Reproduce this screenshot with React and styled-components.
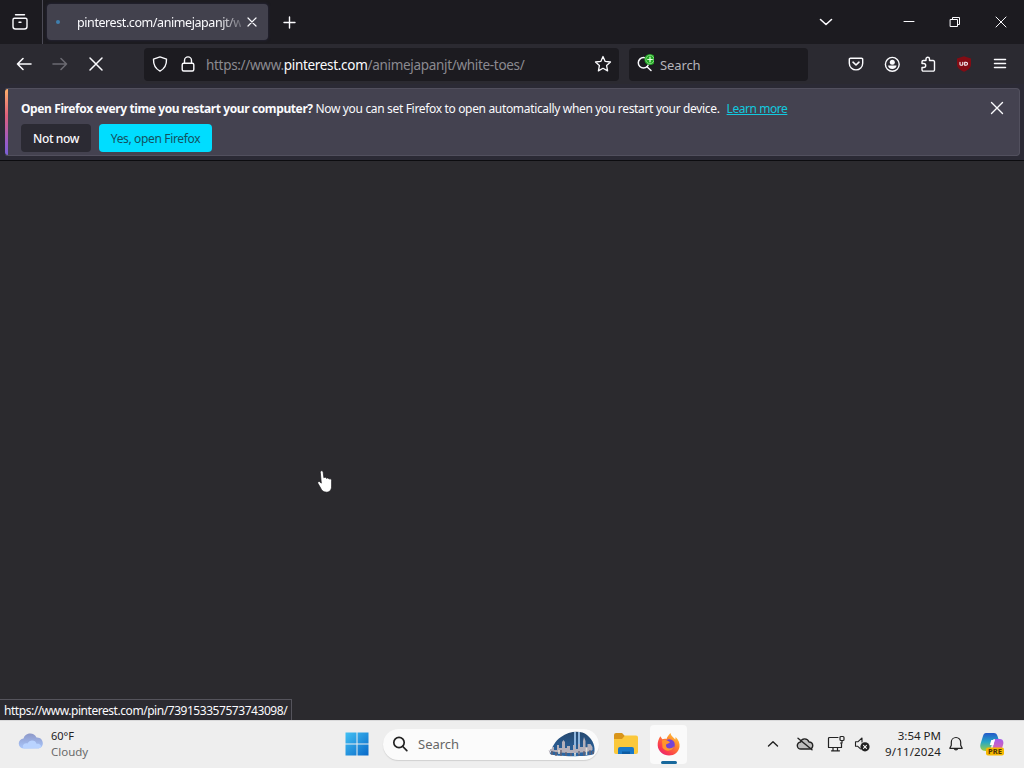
import React from "react";
import styled, { createGlobalStyle } from "styled-components";

const GlobalStyle = createGlobalStyle`
  * {
    box-sizing: border-box;
  }

  body {
    margin: 0;
    overflow: hidden;
    font-family: "Noto Sans", "Open Sans", sans-serif;
  }
`;

const Desktop = styled.div`
  position: relative;
  display: flex;
  flex-direction: column;
  width: 1024px;
  height: 768px;
  background: #2b2a2e;
`;

const Text = styled.span`
  white-space: pre;
  font-size: ${props => props.$size || 12}px;
  font-weight: ${props => props.$weight || 400};
  letter-spacing: ${props => props.$spacing || 0}px;
  color: ${props => props.$color || "#fbfbfe"};
`;

const TabStrip = styled.div`
  display: flex;
  align-items: center;
  height: 44px;
  background: #1c1b20;
`;

const Cell = styled.div`
  display: flex;
  flex: none;
  align-items: center;
  justify-content: center;
  width: ${props => props.$width || 36}px;
  height: 100%;
`;

const FirefoxView = styled(Cell)`
  width: 43px;
  padding-right: 3px;
  border-right: 1px solid #4b4a55;
`;

const Tab = styled.div`
  display: flex;
  align-items: center;
  width: 221px;
  height: 36px;
  margin-left: 4px;
  border-radius: 4px;
  background: #42414d;
  box-shadow: 0 0 3px #2a2940;
`;

const Loader = styled.div`
  width: 4px;
  height: 4px;
  margin: 0 17px 0 9px;
  border-radius: 50%;
  background: #3f7fae;
`;

const TabTitle = styled.div`
  width: 164px;
  overflow: hidden;
  line-height: 20px;
  white-space: nowrap;
  mask-image: linear-gradient(to right, #000 142px, transparent 170px);
`;

const Spacer = styled.div`
  flex: 1;
`;

const Toolbar = styled.div`
  display: flex;
  align-items: center;
  height: 40px;
  padding: 0 6px;
  background: #2b2a31;
`;

const Field = styled.div`
  display: flex;
  align-items: center;
  width: ${props => props.$width}px;
  height: 33px;
  margin-left: ${props => props.$gap}px;
  border-radius: 4px;
  background: #1c1b20;
`;

const UrlText = styled.div`
  flex: 1;
  padding: 1px 0 0 6px;
  line-height: 20px;
  white-space: nowrap;
`;

const SearchText = styled.div`
  padding: 1px 0 0 3px;
  line-height: 20px;
`;

const NoticeArea = styled.div`
  height: 77px;
  padding: 4px 4px 0;
  border-bottom: 1px solid #0c0c0f;
  background: #2b2a35;
`;

const Notice = styled.div`
  display: flex;
  height: 68px;
  border: 1px solid #52505e;
  border-left-color: #2b2a35;
  border-radius: 4px;
  overflow: hidden;
  background: #444250;
`;

const NoticeStripe = styled.div`
  width: 3px;
  background: linear-gradient(#ffb06a, #e0607c 40%, #9a5bc8 80%, #7a5fd8);
`;

const NoticeBody = styled.div`
  flex: 1;
  padding: 8px 0 0 13px;
`;

const NoticeMessage = styled.div`
  height: 27px;
  line-height: 20px;
  white-space: nowrap;
`;

const Link = styled(Text)`
  margin-left: 7px;
  color: #12c9df;
  text-decoration: underline;
`;

const NoticeButtons = styled.div`
  display: flex;
  gap: 8px;
`;

const Button = styled.button`
  display: flex;
  align-items: center;
  justify-content: center;
  width: ${props => props.$width}px;
  height: 28px;
  padding: 1px 0 0;
  border: 0;
  border-radius: 4px;
  font-family: inherit;
  background: ${props => (props.$primary ? "#00ddff" : "#2b2a33")};
`;

const NoticeClose = styled.div`
  padding: 12px 15px 0 0;
  line-height: 0;
`;

const Page = styled.div`
  flex: 1;
  display: flex;
  align-items: flex-end;
`;

const StatusPanel = styled.div`
  width: 292px;
  height: 21px;
  padding-left: 4px;
  border: 1px solid #55545c;
  border-width: 1px 1px 0 0;
  line-height: 19px;
  background: #2b2a30;
`;

const Pointer = styled.svg`
  position: absolute;
  left: 315px;
  top: 469px;
`;

const Taskbar = styled.div`
  display: flex;
  align-items: center;
  height: 48px;
  padding-bottom: 1px;
  border-top: 1px solid #d9d9da;
  background: #eeeeee;
`;

const Weather = styled.div`
  display: flex;
  gap: 7px;
  width: 336px;
  padding-left: 18px;
`;

const Lines = styled.div`
  display: flex;
  flex-direction: column;
  align-items: ${props => props.$align || "flex-start"};
  line-height: 16px;
`;

const TaskSearch = styled.div`
  display: flex;
  align-items: center;
  width: 216px;
  height: 31px;
  margin: 0 6px;
  padding: 0 3px 0 9px;
  border-radius: 16px;
  background: #fbfbfb;
  box-shadow: 0 1px 1px #d0d0d0;
`;

const TaskSearchText = styled.div`
  flex: 1;
  padding: 0 0 1px 10px;
  line-height: 20px;
`;

const ActiveApp = styled.div`
  display: flex;
  flex-direction: column;
  align-items: center;
  width: 37px;
  height: 39px;
  padding-top: 7px;
  margin-left: 4px;
  border-radius: 4px;
  background: #fafafa;
`;

const ActiveMark = styled.div`
  width: 16px;
  height: 3px;
  margin-top: 5px;
  border-radius: 2px;
  background: #17689c;
`;

const Clock = styled(Lines)`
  width: 72px;
  padding-right: 4px;
`;

// shared wrapper for the line icons
const Icon = ({ size = 16, color = "#fbfbfe", stroke = 1.4, children }) => (
  <svg
    width={size}
    height={size}
    viewBox={`0 0 ${size} ${size}`}
    fill="none"
    stroke={color}
    strokeWidth={stroke}
    strokeLinecap="round"
    strokeLinejoin="round"
  >
    {children}
  </svg>
);

const TabBar = () => (
  <TabStrip>
    <FirefoxView>
      <Icon size={18} stroke={1.4}>
        <path d="M4.500 1.700h9M3.500 5.200h11A1.500 1.500 0 0 1 16 6.700v6.800a2.500 2.500 0 0 1-2.500 2.500h-9A2.500 2.500 0 0 1 2 13.500V6.700a1.500 1.500 0 0 1 1.500-1.500zM8 9.300h2" />
      </Icon>
    </FirefoxView>
    <Tab>
      <Loader />
      <TabTitle>
        <Text $size={12.5} $spacing={-0.42}>
          pinterest.com/animejapanjt/w
        </Text>
      </TabTitle>
      <Cell $width={22}>
        <Icon size={10} stroke={1.2}>
          <path d="M1 1l8 8M9 1L1 9" />
        </Icon>
      </Cell>
    </Tab>
    <Cell $width={43}>
      <Icon size={13}>
        <path d="M6.500 1v11M1 6.500h11" />
      </Icon>
    </Cell>
    <Spacer />
    <Cell $width={120}>
      <Icon size={14} stroke={1.6}>
        <path d="M1.500 4.500L7 9.500l5.500-5" />
      </Icon>
    </Cell>
    <Cell $width={46}>
      <Icon size={12} stroke={1}>
        <path d="M1 5.500h10" />
      </Icon>
    </Cell>
    <Cell $width={46}>
      <Icon size={12} stroke={1}>
        <path d="M1.500 3.500h7v7h-7zM3.500 3.500v-2h7v7h-2" />
      </Icon>
    </Cell>
    <Cell $width={46}>
      <Icon size={12} stroke={1}>
        <path d="M1 1l10 10M11 1L1 11" />
      </Icon>
    </Cell>
  </TabStrip>
);

const NavBar = () => (
  <Toolbar>
    <Cell>
      <Icon stroke={1.6}>
        <path d="M15 8H1.500M7 2.500L1.500 8 7 13.500" />
      </Icon>
    </Cell>
    <Cell>
      <Icon color="#6b6a71" stroke={1.6}>
        <path d="M1 8h13.500M9 2.500L14.500 8 9 13.500" />
      </Icon>
    </Cell>
    <Cell>
      <Icon stroke={1.5}>
        <path d="M2 2l12 12M14 2L2 14" />
      </Icon>
    </Cell>
    <Field $width={475} $gap={30}>
      <Cell $width={32}>
        <Icon>
          <path d="M8 .9l6.500 2.200c.2 5-1.200 9.200-6.500 12C2.700 12.300 1.300 8.100 1.500 3.100z" />
        </Icon>
      </Cell>
      <Cell $width={24}>
        <Icon>
          <rect x="2.200" y="7.300" width="11.600" height="7.700" rx="1.500" />
          <path d="M4.500 7V4.400a3.500 3.500 0 0 1 7 0V7" />
        </Icon>
      </Cell>
      <UrlText>
        <Text $size={13.5} $spacing={-0.31} $color="#8b8a90">
          https://www.
        </Text>
        <Text $size={13.5} $spacing={-0.31}>
          pinterest.com
        </Text>
        <Text $size={13.5} $spacing={-0.31} $color="#8b8a90">
          /animejapanjt/white-toes/
        </Text>
      </UrlText>
      <Cell $width={32}>
        <Icon size={18} stroke={1.3}>
          <path d="M9 1.500l2.200 4.900 5.300.6-3.900 3.600 1 5.300L9 13.300l-4.600 2.600 1-5.300L1.500 7l5.300-.6z" />
        </Icon>
      </Cell>
    </Field>
    <Field $width={179} $gap={10}>
      <Cell $width={28}>
        <Icon size={22} stroke={1.5}>
          <circle cx="11.500" cy="9.800" r="5.200" />
          <path d="M15 13.800l4 3.700" />
          <circle cx="18" cy="6.500" r="5.600" fill="#22a824" stroke="none" />
          <circle cx="18" cy="6.500" r="4.200" stroke="#b8f0b0" strokeWidth=".6" />
          <path d="M18 4.200v4.600M15.700 6.500h4.600" stroke="#e4ffe0" strokeWidth="1.200" />
        </Icon>
      </Cell>
      <SearchText>
        <Text $size={13} $spacing={-0.1} $color="#b5b4ba">
          Search
        </Text>
      </SearchText>
    </Field>
    <Spacer />
    <Cell>
      <Icon>
        <path d="M2.500 2.200h11a1.200 1.200 0 0 1 1.200 1.200v3.800a6.700 6.700 0 0 1-13.400 0V3.400a1.200 1.200 0 0 1 1.200-1.200z" />
        <path d="M5 6.200l3 2.800 3-2.800" stroke="#fbfbfe" strokeWidth="1.600" />
      </Icon>
    </Cell>
    <Cell>
      <Icon>
        <circle cx="8.300" cy="8.300" r="6.900" />
        <circle cx="8.300" cy="6.200" r="2.500" fill="#fbfbfe" stroke="none" />
        <path
          d="M4.100 9.600h8.400c0 2-1.800 3.500-4.200 3.500s-4.200-1.500-4.200-3.500z"
          fill="#fbfbfe"
          stroke="none"
        />
      </Icon>
    </Cell>
    <Cell>
      <Icon>
        <path d="M2 7.500V5.800A1.300 1.300 0 0 1 3.300 4.500H6V3a1.700 1.700 0 0 1 3.500 0v1.500h3.700a1.300 1.300 0 0 1 1.300 1.300v8a1.300 1.300 0 0 1-1.300 1.300H3.300A1.300 1.300 0 0 1 2 13.800v-2.300h1.700a2 2 0 0 0 0-4z" />
      </Icon>
    </Cell>
    <Cell>
      <Icon>
        <path
          d="M8 .3l7 2.200v6C15 12 11.500 14.500 8 15.800 4.500 14.500 1 12 1 8.500v-6z"
          fill="#830c14"
          stroke="none"
        />
        <path
          d="M4 6.200v2.200c0 1.200 2.800 1.200 2.800 0V6.200M8.700 6.200v3.100h1.200c2.100 0 2.100-3.100 0-3.100z"
          strokeWidth="1.100"
        />
      </Icon>
    </Cell>
    <Cell>
      <Icon stroke={1.5}>
        <path d="M2.500 3.500h11M2.500 7.500h11M2.500 11.500h11" />
      </Icon>
    </Cell>
  </Toolbar>
);

const StartupNotice = () => (
  <NoticeArea>
    <Notice>
      <NoticeStripe />
      <NoticeBody>
        <NoticeMessage>
          <Text $weight={700} $spacing={-0.39}>
            Open Firefox every time you restart your computer?
          </Text>
          <Text $spacing={-0.335}>
            {" "}
            Now you can set Firefox to open automatically when you restart your
            device.
          </Text>
          <Link $spacing={-0.45}>Learn more</Link>
        </NoticeMessage>
        <NoticeButtons>
          <Button $width={70}>
            <Text $weight={500} $spacing={-0.4}>
              Not now
            </Text>
          </Button>
          <Button $width={113} $primary>
            <Text $color="#13515f" $spacing={-0.35}>
              Yes, open Firefox
            </Text>
          </Button>
        </NoticeButtons>
      </NoticeBody>
      <NoticeClose>
        <Icon size={14}>
          <path d="M1.500 1.500l11 11M12.500 1.500l-11 11" />
        </Icon>
      </NoticeClose>
    </Notice>
  </NoticeArea>
);

const CloudIcon = () => (
  <svg width="26" height="26" viewBox="0 0 26 26">
    <defs>
      <linearGradient id="cloud" x2="0" y2="1">
        <stop offset="0" stopColor="#8d98c8" />
        <stop offset="1" stopColor="#a9c6fb" />
      </linearGradient>
    </defs>
    <path
      d="M6 20.500a5 5 0 0 1-.5-10C7 4.500 16 3.500 18.500 9.500c8-.5 8.500 11 1 11z"
      fill="url(#cloud)"
    />
    <path
      d="M6 20.500c-3-2 0-6 3.500-5 2-4.500 8.500-3.500 9 .3 3.500-.8 6 2.500 3.500 4.200z"
      fill="#b9d3ff"
    />
  </svg>
);

const WindowsIcon = () => (
  <svg width="24" height="24" viewBox="0 0 24 24">
    <defs>
      <linearGradient id="win" x2="1" y2="1">
        <stop offset="0" stopColor="#43c1f4" />
        <stop offset="1" stopColor="#0868c8" />
      </linearGradient>
    </defs>
    <path
      d="M.5.500h11v11H.5zM12.500.500h11v11h-11zM.5 12.500h11v11H.5zM12.500 12.500h11v11h-11z"
      fill="url(#win)"
    />
  </svg>
);

// night skyline with two light beams
const SkylineArt = () => (
  <svg width="48" height="28" viewBox="0 0 48 28">
    <defs>
      <linearGradient id="sky" x2="0" y2="1">
        <stop offset="0" stopColor="#26486e" />
        <stop offset="1" stopColor="#2a68a8" />
      </linearGradient>
    </defs>
    <path
      d="M2 24C4 17 7 11 13 7 21 1 33 0 39 5c6 5 9 12 7 19-5 3-38 3-44 0z"
      fill="url(#sky)"
    />
    <path d="M27 2v22M31 2v22" stroke="#a8cff5" strokeWidth="1.600" />
    <path
      d="M2 24v-5h2v-2h2v3h3v-5h2v3h3v-6l1.500-2 1.500 2v6h2v-2h3v4h3v-5h2v4h3v-5h2v3h3v-6l1-4 1.500 4v6h2v-3h3l2 3v3c-6 4-38 4-44 0z"
      fill="#b4b0ba"
    />
    <path
      d="M4 25v-4M8 26v-4M13 26v-6M18 26v-4M23 26v-3M31 26v-5M36 26v-5M42 25v-5M45 24v-3"
      stroke="#6b616e"
      strokeWidth="1.300"
    />
    <path d="M11 24v-4M27 26v-3M38.500 25v-7" stroke="#e5ddd2" strokeWidth="1.500" />
  </svg>
);

const FolderIcon = () => (
  <svg width="26" height="24" viewBox="0 0 26 24">
    <path d="M1 3a2 2 0 0 1 2-2h6l3 3h11v8H1z" fill="#d9951a" />
    <path
      d="M1 7h8l3-3.500h11a2 2 0 0 1 2 2V20a2 2 0 0 1-2 2H3a2 2 0 0 1-2-2z"
      fill="#fbc83b"
    />
    <path d="M5 22v-5a2 2 0 0 1 2-2h12a2 2 0 0 1 2 2v5z" fill="#1978c8" />
    <path d="M9 22v-2.500h8V22z" fill="#0c5ba2" />
  </svg>
);

const FirefoxIcon = () => (
  <svg width="24" height="24" viewBox="0 0 24 24">
    <defs>
      <linearGradient id="flame" x1="1" x2=".2" y2="1">
        <stop offset="0" stopColor="#ffe04a" />
        <stop offset=".4" stopColor="#ff8a2b" />
        <stop offset=".8" stopColor="#fb3a50" />
        <stop offset="1" stopColor="#e22779" />
      </linearGradient>
    </defs>
    <path
      d="M3.300 4.200l2 3C7 6.500 8.500 6.500 9.500 7c.8-2.500 2.500-4.500 4-6 .3 3 3 4.200 4.800 6.500l.3-2.500c3 3 4.500 6.500 3.900 10C21.500 20 17.500 23.500 12 23.500S1 19.500.7 13.500C.5 10 1.500 7 3.300 4.200z"
      fill="url(#flame)"
    />
    <circle cx="12.300" cy="12.700" r="5.500" fill="#7444d6" />
    <path
      d="M5 8.500c3-2 5 0 8 1.500-1 2-4 1.200-4 3.500 0 3.500 5.500 4 8 .7-.5 4.500-8 6.500-11.500 1.500z"
      fill="#ff962c"
    />
  </svg>
);

const CopilotIcon = () => (
  <svg width="26" height="26" viewBox="0 0 26 26">
    <defs>
      <linearGradient id="copilotCool" x2="0" y2="1">
        <stop offset="0" stopColor="#2459c9" />
        <stop offset=".5" stopColor="#26a6c7" />
        <stop offset="1" stopColor="#9cce45" />
      </linearGradient>
      <linearGradient id="copilotWarm" x2="0" y2="1">
        <stop offset="0" stopColor="#a45cec" />
        <stop offset="1" stopColor="#f56b8f" />
      </linearGradient>
    </defs>
    <path
      d="M7 2h8c3 0 3.500 3 4.500 6h-5l-3 10c-1 2-3 2-5 2-4 0-6-3-5-7L4 5c.5-2 1.500-3 3-3z"
      fill="url(#copilotCool)"
    />
    <path
      d="M16 8h5c3 0 4 3 3 6l-2 6c-1 2-2 3-4 3h-7c3-3 3-9 5-15z"
      fill="url(#copilotWarm)"
    />
    <path d="M10.800 14l1.500-5h3.500l-1.300 5z" fill="#fff" />
    <rect x="7" y="16.500" width="18" height="8" rx="2" fill="#f5b800" />
    <text
      x="16"
      y="23.200"
      textAnchor="middle"
      fontFamily="Noto Sans"
      fontSize="7.500"
      fontWeight="700"
      fill="#4a3305"
    >
      PRE
    </text>
  </svg>
);

const SystemTray = () => (
  <>
    <Cell $width={28}>
      <Icon size={12} color="#222">
        <path d="M1.500 8L6 3.700 10.500 8" />
      </Icon>
    </Cell>
    <Cell $width={35}>
      <Icon size={18} color="#222" stroke={1.4}>
        <path
          d="M5 14a3.500 3.500 0 0 1-.4-7C5.500 3 11.500 2.800 13 7c5 .2 4.800 7 .5 7z"
          fill="#bdbdbd"
        />
        <path d="M2 3.200l14 11.500" />
      </Icon>
    </Cell>
    <Cell $width={28}>
      <Icon size={18} color="#222" stroke={1.2}>
        <path d="M11 2.500H2.500a1 1 0 0 0-1 1v9h13v-4M6 12.500v3M10.500 12.500v3M4.500 15.800h8" />
        <rect x="13" y="1.500" width="4" height="4" rx="1" />
        <path d="M15 5.500v2.500h-1.500" />
      </Icon>
    </Cell>
    <Cell $width={23}>
      <Icon size={16} color="#222" stroke={1.1}>
        <path d="M1.500 5.800v4.500h2.300l2.700 2.500M1.500 5.800h2.300L8 2v4" />
        <circle cx="11" cy="10.800" r="4.600" fill="#222" stroke="none" />
        <path d="M9.500 9.300l3 3M12.500 9.300l-3 3" stroke="#eee" />
      </Icon>
    </Cell>
    <Clock $align="flex-end">
      <Text $size={11.5} $color="#222">
        3:54 PM
      </Text>
      <Text $size={11.5} $color="#222" $spacing={0.15}>
        9/11/2024
      </Text>
    </Clock>
    <Cell $width={22}>
      <Icon color="#222" stroke={1.2}>
        <path d="M8 1.500A4.700 4.700 0 0 0 3.300 6.200v3L1.800 12.300h12.400l-1.500-3.100v-3A4.700 4.700 0 0 0 8 1.500zM6.300 12.500a1.750 1.750 0 0 0 3.400 0" />
      </Icon>
    </Cell>
    <Cell $width={50}>
      <CopilotIcon />
    </Cell>
    <Cell $width={7} />
  </>
);

export default function App() {
  return (
    <>
      <GlobalStyle />
      <Desktop>
        <TabBar />
        <NavBar />
        <StartupNotice />
        <Page>
          <StatusPanel>
            <Text $spacing={-0.45}>
              https://www.pinterest.com/pin/739153357573743098/
            </Text>
          </StatusPanel>
        </Page>
        <Taskbar>
          <Weather>
            <CloudIcon />
            <Lines>
              <Text $size={11} $color="#222">
                60°F
              </Text>
              <Text $size={11.5} $color="#6a6a6a">
                Cloudy
              </Text>
            </Lines>
          </Weather>
          <Cell $width={41}>
            <WindowsIcon />
          </Cell>
          <TaskSearch>
            <Icon color="#222" stroke={1.7}>
              <circle cx="7" cy="6.500" r="5.200" />
              <path d="M10.800 10.500l4 4.200" />
            </Icon>
            <TaskSearchText>
              <Text $size={13} $color="#666">
                Search
              </Text>
            </TaskSearchText>
            <SkylineArt />
          </TaskSearch>
          <Cell $width={41}>
            <FolderIcon />
          </Cell>
          <ActiveApp>
            <FirefoxIcon />
            <ActiveMark />
          </ActiveApp>
          <Spacer />
          <SystemTray />
        </Taskbar>
        <Pointer width="20" height="25" viewBox="0 0 20 25">
          <path
            d="M5.300 3.500c-.2-2.200 2.600-2.400 2.900-.2l.7 5.500c.6-.9 2.400-.8 2.600.6.700-.9 2.300-.6 2.500.7.800-.7 2.600-.2 2.600 1.300v5.600c0 4-2 6.200-5 6.200-3.500 0-4.700-1.700-6-4.200L3 14.500c-.9-1.500.9-2.800 2.100-1.600l1.200 1.300z"
            fill="#fff"
            stroke="#17161a"
            strokeWidth=".7"
          />
        </Pointer>
      </Desktop>
    </>
  );
}
